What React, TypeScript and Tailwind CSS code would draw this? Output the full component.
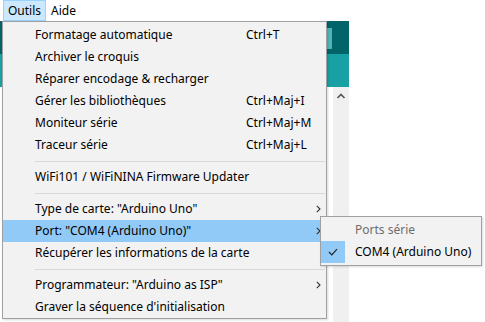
type Item =
  | { sep: true }
  | { sep?: false; label: string; shortcut?: string; sub?: boolean; active?: boolean };

const items: Item[] = [
  { label: 'Formatage automatique', shortcut: 'Ctrl+T' },
  { label: 'Archiver le croquis' },
  { label: 'Réparer encodage & recharger' },
  { label: 'Gérer les bibliothèques', shortcut: 'Ctrl+Maj+I' },
  { label: 'Moniteur série', shortcut: 'Ctrl+Maj+M' },
  { label: 'Traceur série', shortcut: 'Ctrl+Maj+L' },
  { sep: true },
  { label: 'WiFi101 / WiFiNINA Firmware Updater' },
  { sep: true },
  { label: 'Type de carte: "Arduino Uno"', sub: true },
  { label: 'Port: "COM4 (Arduino Uno)"', sub: true, active: true },
  { label: 'Récupérer les informations de la carte' },
  { sep: true },
  { label: 'Programmateur: "Arduino as ISP"', sub: true },
  { label: "Graver la séquence d'initialisation" },
];

function Chevron() {
  return (
    <svg width="5" height="8" viewBox="0 0 5 8" className="text-[#333]">
      <path d="M0.8 0.8 L4 4 L0.8 7.2" fill="none" stroke="currentColor" strokeWidth="1.1" />
    </svg>
  );
}

export default function App() {
  return (
    <div
      className="relative w-[485px] h-[322px] overflow-hidden bg-white text-[12px] text-black"
      style={{ fontFamily: '"Noto Sans", "Segoe UI", sans-serif' }}
    >
      {/* Menu bar */}
      <div className="flex h-[21px] items-stretch bg-white">
        <div className="ml-[3px] flex items-center border border-[#99d1ff] bg-[#cce8ff] px-[4px]">Outils</div>
        <div className="flex items-center px-[5px]">Aide</div>
      </div>

      {/* Window content behind the menu */}
      <div className="flex w-[349px]">
        <div className="flex-1">
          <div className="h-[33px] bg-[#006468]" />
          <div className="h-[33px] bg-[#17a1a5]" />
        </div>
      </div>
      <div className="absolute left-[324px] top-[28px] h-[21px] w-[8px] bg-[#4db6b9]" />
      <div className="absolute left-[333px] top-[87px] h-[235px] w-[16px] bg-[#f0f0f0]">
        <svg width="16" height="16" viewBox="0 0 16 16" className="text-[#555]">
          <path d="M4.5 11 L8 7.5 L11.5 11" fill="none" stroke="currentColor" strokeWidth="1.6" />
        </svg>
      </div>

      {/* Dropdown menu */}
      <div className="absolute left-[2px] top-[21px] w-[325px] border border-[#a0a0a0] bg-[#f2f2f2] pt-[2px] shadow-[1px_1px_2px_rgba(0,0,0,0.15)]">
        {items.map((it, i) =>
          it.sep ? (
            <div key={i} className="flex h-[10px] items-center pl-[32px] pr-[1px]">
              <div className="h-px w-full bg-[#d7d7d7]" />
            </div>
          ) : (
            <div
              key={i}
              className={`flex h-[22px] items-center ${it.active ? 'bg-[#91c9f7]' : ''}`}
            >
              <span className="w-[243px] pl-[32px] whitespace-nowrap">{it.label}</span>
              <span className="flex-1 whitespace-nowrap">{it.shortcut}</span>
              {it.sub && (
                <span className="mr-[5px] flex items-center">
                  <Chevron />
                </span>
              )}
            </div>
          ),
        )}
      </div>

      {/* Submenu */}
      <div className="absolute left-[320px] top-[216px] w-[162px] border border-[#a0a0a0] bg-[#f2f2f2] py-[2px] shadow-[1px_1px_2px_rgba(0,0,0,0.15)]">
        <div className="flex h-[22px] items-center pl-[34px] text-[#6d6d6d]">Ports série</div>
        <div className="flex h-[22px] items-center">
          <span className="flex h-[22px] w-[24px] items-center justify-center bg-[#91c9f7]">
            <svg width="10" height="8" viewBox="0 0 10 8" className="text-[#222]">
              <path d="M1 4 L3.8 6.8 L9 1.2" fill="none" stroke="currentColor" strokeWidth="1.2" />
            </svg>
          </span>
          <span className="pl-[10px] whitespace-nowrap">COM4 (Arduino Uno)</span>
        </div>
      </div>
    </div>
  );
}
